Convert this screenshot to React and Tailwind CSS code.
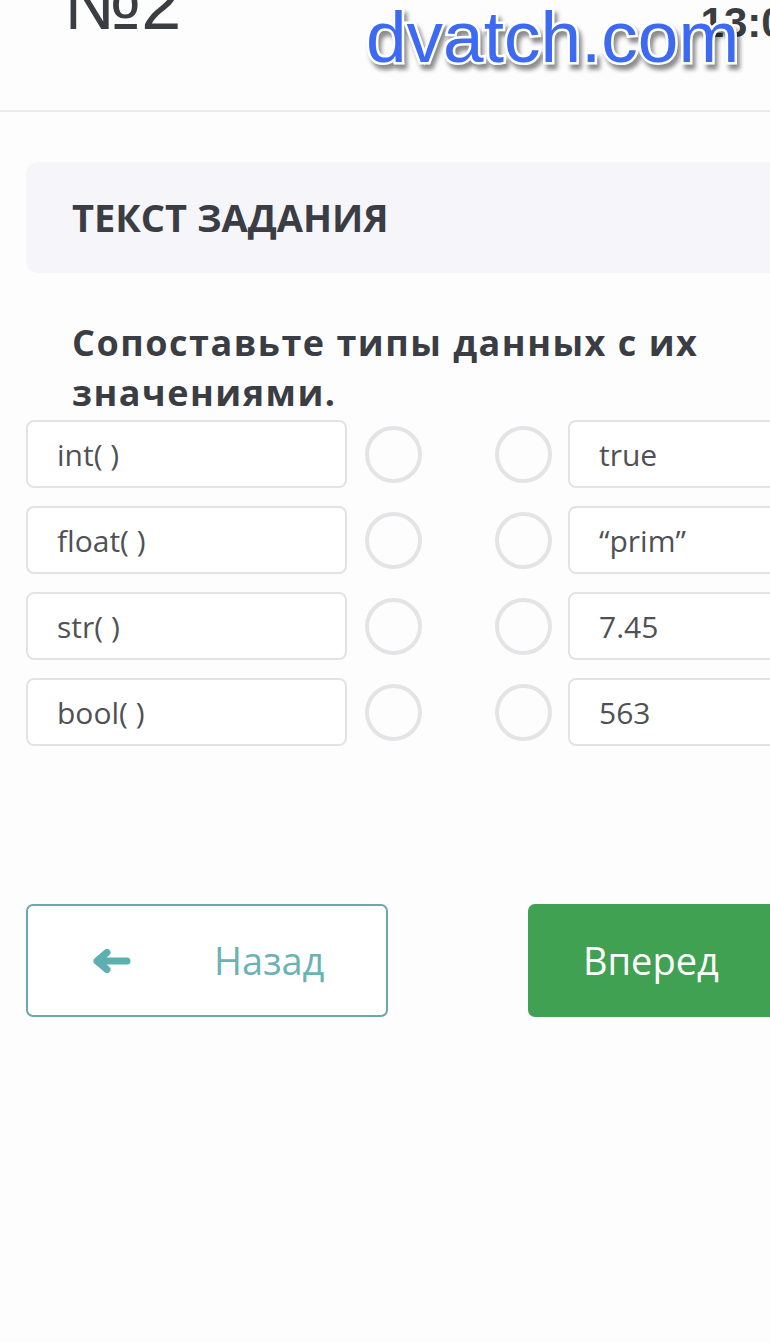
import React from 'react';

const pairs = [
  { left: 'int( )', right: 'true' },
  { left: 'float( )', right: '“prim”' },
  { left: 'str( )', right: '7.45' },
  { left: 'bool( )', right: '563' },
];

const ArrowLeft = () => (
  <svg width="40" height="24" viewBox="0 0 40 24" fill="none">
    <path d="M5 12 L15 3.5 M5 12 L15 20.5 M5 12 H35" stroke="#5cb0b0" strokeWidth="7" strokeLinecap="round" strokeLinejoin="round" />
  </svg>
);

const ArrowRight = () => (
  <svg width="40" height="24" viewBox="0 0 40 24" fill="none">
    <path d="M35 12 L25 3.5 M35 12 L25 20.5 M35 12 H5" stroke="#ffffff" strokeWidth="7" strokeLinecap="round" strokeLinejoin="round" />
  </svg>
);

const Circle = () => (
  <div className="w-[57px] h-[57px] rounded-full border-[4px] border-[#e4e4e6] shrink-0" />
);

const App = () => {
  return (
    <div className="relative w-full min-h-[1343px] overflow-hidden bg-[#fefdfe] font-['Open_Sans',sans-serif]">
      <div className="w-[916px] pb-[200px]">
        {/* header */}
        <div className="relative h-[112px] border-b-2 border-[#ebe9ec] flex items-start">
          <div className="ml-[64px] mt-[-32px] text-[72px] leading-none text-[#3a3d42] font-['Liberation_Sans',sans-serif]">№2</div>
          <div className="ml-auto mr-[108px] mt-[2px] text-[42px] leading-none font-bold text-[#3a3d42] font-['Liberation_Sans',sans-serif]">13:05</div>
        </div>

        <div className="px-[26px]">
          {/* task title card */}
          <div className="mt-[50px] h-[111px] rounded-[12px] bg-[#f6f5f9] flex items-center pl-[46px]">
            <h2 className="text-[38px] font-bold text-[#3a3d43]">ТЕКСТ ЗАДАНИЯ</h2>
          </div>

          {/* question */}
          <p className="mt-[45px] pl-[46px] pr-[120px] text-[36px] leading-[50px] font-bold tracking-[1.5px] text-[#3a3d43]">
            Сопоставьте типы данных с их значениями.
          </p>

          {/* matching rows */}
          <div className="mt-[2px] flex flex-col gap-[18px]">
            {pairs.map((p, i) => (
              <div key={i} className="flex items-center">
                <div className="w-[321px] h-[68px] rounded-[8px] border-2 border-[#e3e2e4] bg-white flex items-center pl-[29px] text-[30px] text-[#4f5155]">
                  {p.left}
                </div>
                <div className="ml-[18px]"><Circle /></div>
                <div className="ml-[73px]"><Circle /></div>
                <div className="ml-[16px] w-[322px] h-[68px] rounded-[8px] border-2 border-[#e3e2e4] bg-white flex items-center pl-[29px] text-[30px] text-[#4f5155]">
                  {p.right}
                </div>
              </div>
            ))}
          </div>

          {/* navigation buttons */}
          <div className="mt-[158px] flex justify-between">
            <button className="w-[362px] h-[113px] rounded-[7px] border-2 border-[#6aa9aa] bg-white flex items-center pl-[64px]">
              <ArrowLeft />
              <span className="ml-[82px] text-[38px] text-[#6bb3b3]">Назад</span>
            </button>
            <button className="w-[362px] h-[113px] rounded-[7px] bg-[#40a152] flex items-center pl-[55px]">
              <span className="text-[38px] text-white">Вперед</span>
              <span className="ml-auto mr-[64px]"><ArrowRight /></span>
            </button>
          </div>
        </div>
      </div>

      {/* site watermark */}
      <div className="absolute left-[366px] top-0 text-[73px] leading-none text-[#3d6af2] font-['Liberation_Sans',sans-serif] [paint-order:stroke] [-webkit-text-stroke:5px_white] drop-shadow-[3px_5px_2px_rgba(0,0,0,0.45)]">
        dvatch.com
      </div>
    </div>
  );
};

export default App;
